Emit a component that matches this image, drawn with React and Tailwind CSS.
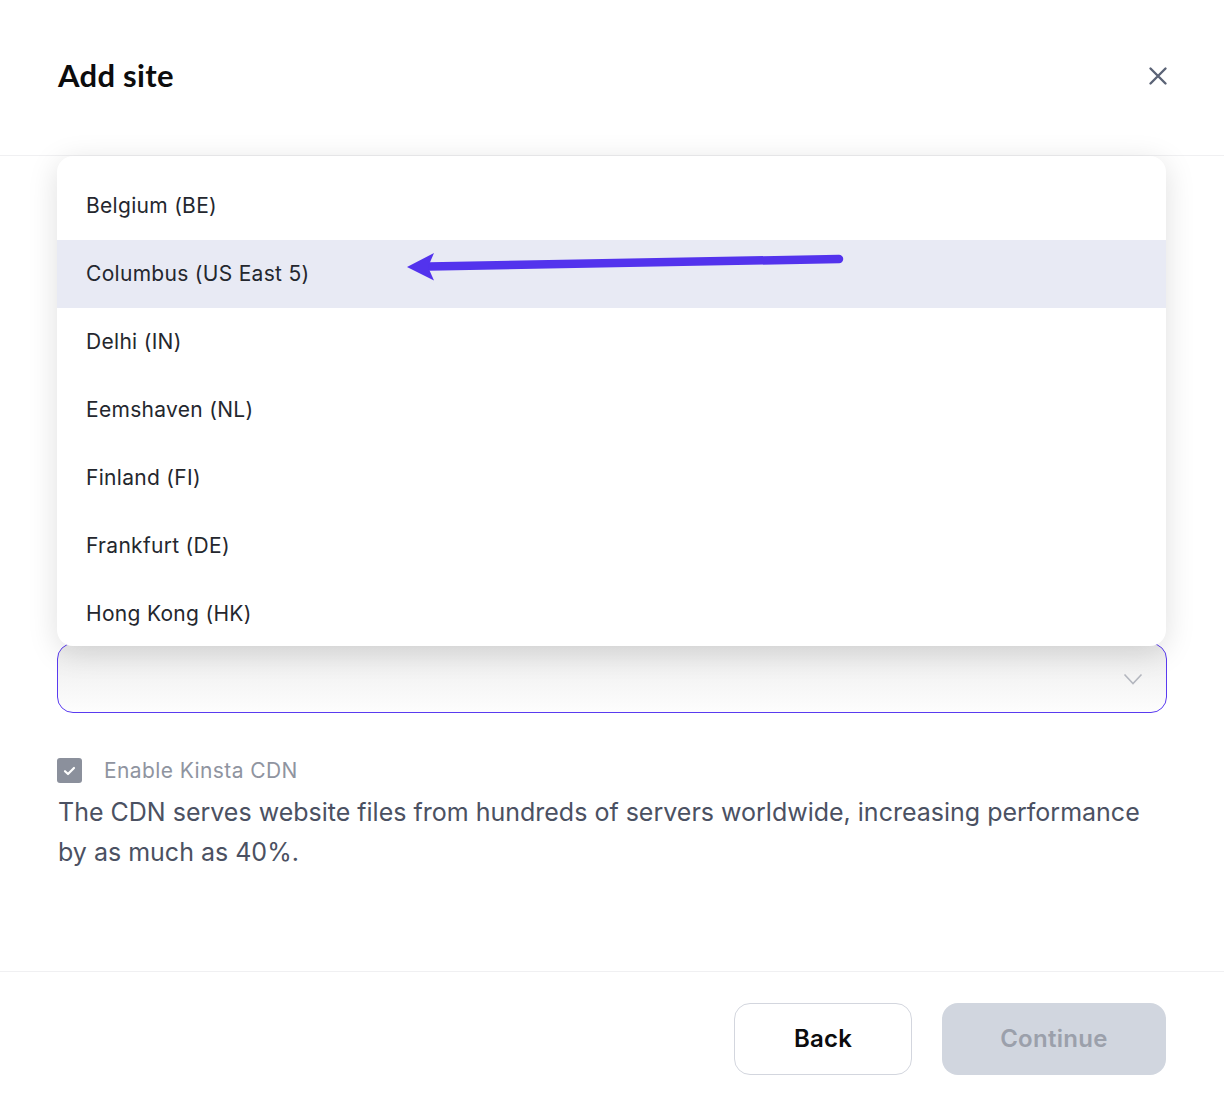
import React from "react";

const items = [
  "Belgium (BE)",
  "Columbus (US East 5)",
  "Delhi (IN)",
  "Eemshaven (NL)",
  "Finland (FI)",
  "Frankfurt (DE)",
  "Hong Kong (HK)",
];

export default function App() {
  return (
    <div className="w-[1224px] h-[1102px] bg-white flex flex-col overflow-hidden" style={{ fontFamily: "Inter, 'Noto Sans', sans-serif" }}>
      <div className="h-[156px] shrink-0 border-b border-[#f0f0f2] flex items-center justify-between pl-[58px] pr-[56px]">
        <h1 className="text-[31px] font-bold text-[#0c0c0d] tracking-[0.3px] -mt-[5px]" style={{ fontFamily: "Lato, Inter, sans-serif" }}>Add site</h1>
        <svg width="20" height="20" viewBox="0 0 20 20" className="-mt-[4px]">
          <path d="M2.5 2.5 L17.5 17.5 M17.5 2.5 L2.5 17.5" stroke="#5b6376" strokeWidth="2.4" strokeLinecap="round" />
        </svg>
      </div>

      <div className="relative flex-1 flex flex-col px-[57px] pt-[487px]">
        <div className="h-[70px] rounded-[16px] border border-[#5a3bf0] bg-gradient-to-b from-[#ececec] to-[#fdfdfd] flex items-center justify-end pr-[23px]">
          <svg width="20" height="12" viewBox="0 0 20 12" className="mt-[2px]">
            <path d="M1.5 1.5 L10 10.5 L18.5 1.5" stroke="#b4b7bf" strokeWidth="1.6" fill="none" />
          </svg>
        </div>

        <div className="flex items-center gap-[22px] mt-[42px]">
          <div className="w-[25px] h-[25px] rounded-[3px] bg-[#8b909c] flex items-center justify-center">
            <svg width="13" height="10" viewBox="0 0 13 10">
              <path d="M2 5.2 L5 8 L11 2" stroke="white" strokeWidth="2.2" fill="none" strokeLinecap="round" strokeLinejoin="round" />
            </svg>
          </div>
          <span className="text-[21px] tracking-[0.4px] text-[#8f94a0]">Enable Kinsta CDN</span>
        </div>
        <p className="text-[25px] leading-[40px] text-[#4b5162] mt-[5px] ml-[1px] tracking-[0px]">
          The CDN serves website files from hundreds of servers worldwide, increasing performance by as much as 40%.
        </p>

        <div className="absolute left-[57px] right-[58px] top-0 h-[490px] bg-white rounded-[16px] shadow-[0_6px_30px_rgba(0,0,0,0.13)] pt-[16px] overflow-hidden">
          {items.map((it, i) => (
            <div key={it} className={`relative h-[68px] flex items-center pl-[29px] text-[21px] tracking-[0.3px] text-[#24272e] ${i === 1 ? "bg-[#e8eaf4]" : ""}`}>
              <span>{it}</span>
              {i === 1 && (
                <svg className="absolute left-[343px] top-0" width="460" height="68" viewBox="0 0 460 68">
                  <path d="M439 19 L29 26.5" stroke="#5333ed" strokeWidth="8.5" strokeLinecap="round" />
                  <path d="M7 27 L34 13 L28 27 L34 40.5 Z" fill="#5333ed" />
                </svg>
              )}
            </div>
          ))}
        </div>
      </div>

      <div className="h-[131px] shrink-0 border-t border-[#f0f0f2] flex items-start justify-end pt-[31px] pr-[58px] gap-[30px]">
        <button className="w-[178px] h-[72px] rounded-[16px] border border-[#d3d6de] bg-white text-[24px] font-semibold tracking-[0.2px] text-[#0c0c0d]">Back</button>
        <button className="w-[224px] h-[72px] rounded-[16px] bg-[#d1d6df] text-[24px] font-semibold tracking-[0.3px] text-[#9ba0ab]">Continue</button>
      </div>
    </div>
  );
}
